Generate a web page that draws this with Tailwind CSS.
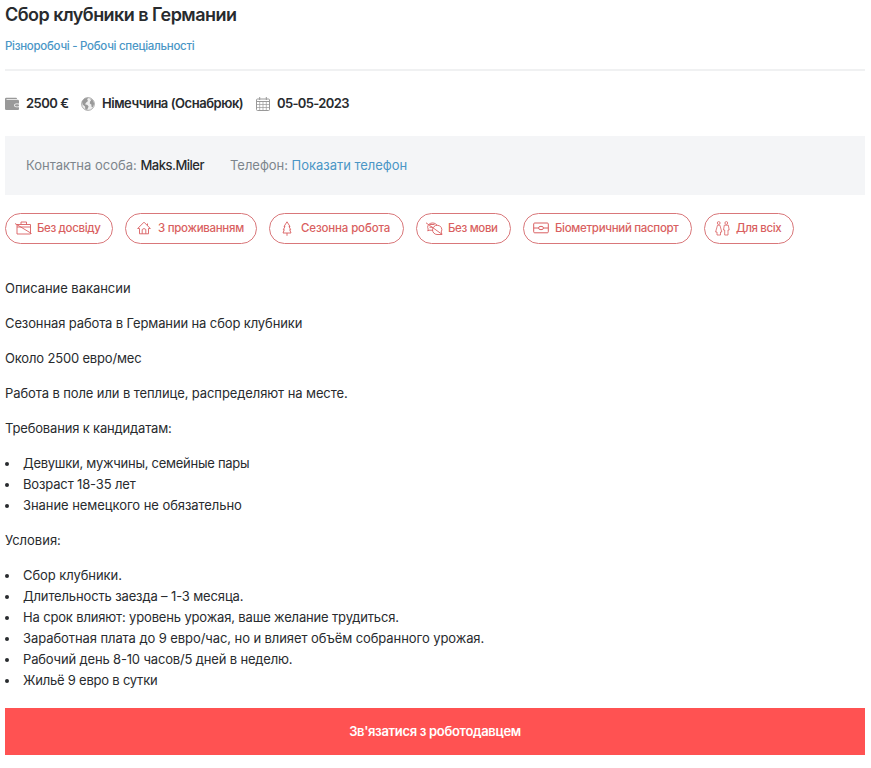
<!DOCTYPE html>
<html lang="uk">
<head>
  <meta charset="UTF-8" />
  <meta name="viewport" content="width=device-width,initial-scale=1" />
  <title>Сбор клубники в Германии</title>
  <script src="https://cdn.jsdelivr.net/npm/@tailwindcss/browser@4"></script>
</head>
<body class="bg-white font-['Inter',sans-serif] text-[#282b2e] overflow-hidden">
  <main class="w-[860px] ml-[5px] text-[13px] leading-[21px]">
    <!-- Title -->
    <header class="h-[71px] border-b-2 border-[#f0f1f2]">
      <h1 class="pt-[3px] text-[18px] leading-[24px] font-semibold whitespace-nowrap tracking-[-0.54px]">Сбор клубники в Германии</h1>
      <p class="mt-[10px] text-[11.5px] leading-[18px] font-medium text-[#4a96c6] whitespace-nowrap tracking-[-0.28px]"><a href="#">Різноробочі - Робочі спеціальності</a></p>
    </header>

    <!-- Salary, place, date -->
    <section class="flex h-[65px] items-center font-semibold whitespace-nowrap">
      <div class="flex w-[76px] items-center gap-[7px]">
        <svg width="14" height="14" viewBox="0 0 14 14" fill="#999" class="shrink-0"><path d="M0 2Q0 .8 1.200.8H11Q12 .8 12 2H1.500v.8H13Q14 3 14 4v2.500H11a1.800 1.800 0 0 0 0 3.700h3V12Q14 13 13 13H1.200Q0 13 0 11.800z"/><rect x="10" y="7.300" width="4" height="2.100" rx="1"/></svg>
        <span class="tracking-[-0.5px]">2500 €</span>
      </div>
      <div class="flex w-[175px] items-center gap-[7px]">
        <svg width="14" height="14" viewBox="0 0 14 14" class="shrink-0"><circle cx="7" cy="7" r="6.400" fill="#eee" stroke="#999" stroke-width=".8"/><path d="M1 4.500 3.500 1.500 7 .8 6.200 2.500 7 4 5.200 5.500 4 7.200 6.400 8 7.600 9.600 6.200 12.800 4.300 12.400 4 9.600 1.600 7.500zM9.200 1.500 12 3.600 13.200 6.800 11.800 10.200 10.300 9.500 10.500 7.800 8.800 6.600 9 4.600 10 3.800z" fill="#999"/></svg>
        <span class="tracking-[-0.47px]">Німеччина (Оснабрюк)</span>
      </div>
      <div class="flex items-center gap-[7px]">
        <svg width="14" height="14" viewBox="0 0 14 14" fill="none" stroke="#999" class="shrink-0"><rect x=".5" y="2" width="13" height="11.500" rx="1"/><path d="M.5 4.500h13M3.700 0v3M10.300 0v3"/><path d="M.5 7.500h13M.5 10.500h13M3.700 5v8.500M7 5v8.500M10.300 5v8.500" stroke-width=".7"/></svg>
        <span class="tracking-[-0.65px]">05-05-2023</span>
      </div>
    </section>

    <!-- Contact -->
    <section class="flex h-[59px] items-center bg-[#f4f5f7] pl-[21px] text-[#7d858c] whitespace-nowrap">
      <p class="w-[204px]">Контактна особа: <span class="font-medium text-[#282b2e] tracking-[-0.5px]">Maks.Miler</span></p>
      <p class="tracking-[-0.03px]">Телефон: <a href="#" class="text-[#4a96c6]">Показати телефон</a></p>
    </section>

    <!-- Tags -->
    <section class="mt-[18px] flex h-[31px] gap-3 text-[11.5px] font-medium text-[#d95f61] whitespace-nowrap">
      <div class="flex w-[108px] items-center rounded-full border border-[#d9777a] pb-px pl-[9px] gap-[5px]">
        <svg width="17" height="14" viewBox="0 0 17 14" fill="none" stroke="currentColor" stroke-width=".9" class="shrink-0"><path d="M2 3.500h13.500V13H2zM6 3.500V1h5.500v2.500M2 6h13.500M0 2.500l16.500 10"/></svg>
        <span class="tracking-[-0.36px]">Без досвіду</span>
      </div>
      <div class="flex w-[132px] items-center rounded-full border border-[#d9777a] pb-px pl-[11px] gap-[7px]">
        <svg width="14" height="14" viewBox="0 0 14 14" fill="none" stroke="currentColor" stroke-width=".9" class="shrink-0"><path d="M.7 7.500 7 1.200l6.300 6.300M.7 7.500h1.800v5.300h9V7.500h1.800M5.200 12.800V8.500Q7 6.500 8.800 8.500v4.300M10.500 4.500v-2"/></svg>
        <span class="tracking-[-0.3px]">З проживанням</span>
      </div>
      <div class="flex w-[135px] items-center rounded-full border border-[#d9777a] pb-px pl-[10px] gap-[7px]">
        <svg width="14" height="15" viewBox="0 0 14 15" fill="none" stroke="currentColor" stroke-width=".9" class="shrink-0"><path d="M7 .8 4 5.500h1L3.300 8.700h1L3 12h8L9.700 8.700h1L9 5.500h1zM7 12v2.800"/></svg>
        <span class="tracking-[-0.15px]">Сезонна робота</span>
      </div>
      <div class="flex w-[95px] items-center rounded-full border border-[#d9777a] pb-px pl-[9px] gap-[5px]">
        <!-- two speech bubbles, crossed out -->
        <svg width="17" height="15" viewBox="0 0 17 15" fill="none" stroke="currentColor" stroke-width=".9" class="shrink-0"><path d="M7 9.200H3L1.800 10l.4-2A4.800 4 0 1 1 11 4.200"/><path d="M11.300 4.300A4.400 4.400 0 0 1 15.200 11l.8 2.500H11A4.500 4.500 0 0 1 11.300 4.300zM0 1.800l16 11.500M3.500 3.500h5M3.500 6.200h3"/></svg>
        <span class="tracking-[-0.35px]">Без мови</span>
      </div>
      <div class="flex w-[169px] items-center rounded-full border border-[#d9777a] pb-px pl-[9px] gap-[6px]">
        <svg width="16" height="12" viewBox="0 0 16 12" fill="none" stroke="currentColor" class="shrink-0"><rect x=".7" y="1" width="14.600" height="9.800" rx="1"/><path d="M.7 6H5.500M10.500 6h4.800"/><ellipse cx="8" cy="6" rx="2.500" ry="1.700"/></svg>
        <span class="tracking-[-0.31px]">Біометричний паспорт</span>
      </div>
      <div class="flex w-[90px] items-center rounded-full border border-[#d9777a] pb-px pl-[10px] gap-[6px]">
        <svg width="15" height="15" viewBox="0 0 15 15" fill="none" stroke="currentColor" stroke-width=".8" class="shrink-0"><circle cx="3.700" cy="2" r="1.400"/><path d="M2.500 4.200h2.400L6.800 11H5.500v3H2V11H.6z"/><circle cx="11.300" cy="2" r="1.400"/><path d="M9.300 4.200h4L14.200 9H13V14H9.700V9H8.500z"/></svg>
        <span class="tracking-[-0.4px]">Для всіх</span>
      </div>
    </section>

    <!-- Description -->
    <section class="mt-[34px] flex flex-col gap-[14px] whitespace-nowrap">
      <p class="tracking-[-0.04px]">Описание вакансии</p>
      <p class="tracking-[-0.12px]">Сезонная работа в Германии на сбор клубники</p>
      <p class="tracking-[-0.17px]">Около 2500 евро/мес</p>
      <p class="tracking-[-0.1px]">Работа в поле или в теплице, распределяют на месте.</p>
      <p class="tracking-[-0.17px]">Требования к кандидатам:</p>
      <ul>
        <li class="flex items-center gap-[14px] tracking-[-0.27px]"><i class="mt-px size-1 rounded-full bg-[#282b2e]"></i>Девушки, мужчины, семейные пары</li>
        <li class="flex items-center gap-[14px] tracking-[-0.15px]"><i class="mt-px size-1 rounded-full bg-[#282b2e]"></i>Возраст 18-35 лет</li>
        <li class="flex items-center gap-[14px] tracking-[-0.06px]"><i class="mt-px size-1 rounded-full bg-[#282b2e]"></i>Знание немецкого не обязательно</li>
      </ul>
      <p>Условия:</p>
      <ul>
        <li class="flex items-center gap-[14px] tracking-[-0.07px]"><i class="mt-px size-1 rounded-full bg-[#282b2e]"></i>Сбор клубники.</li>
        <li class="flex items-center gap-[14px] tracking-[-0.14px]"><i class="mt-px size-1 rounded-full bg-[#282b2e]"></i>Длительность заезда – 1-3 месяца.</li>
        <li class="flex items-center gap-[14px] tracking-[-0.16px]"><i class="mt-px size-1 rounded-full bg-[#282b2e]"></i>На срок влияют: уровень урожая, ваше желание трудиться.</li>
        <li class="flex items-center gap-[14px] tracking-[-0.08px]"><i class="mt-px size-1 rounded-full bg-[#282b2e]"></i>Заработная плата до 9 евро/час, но и влияет объём собранного урожая.</li>
        <li class="flex items-center gap-[14px] tracking-[-0.16px]"><i class="mt-px size-1 rounded-full bg-[#282b2e]"></i>Рабочий день 8-10 часов/5 дней в неделю.</li>
        <li class="flex items-center gap-[14px] tracking-[-0.22px]"><i class="mt-px size-1 rounded-full bg-[#282b2e]"></i>Жильё 9 евро в сутки</li>
      </ul>
    </section>

    <button class="mt-[17px] block h-[47px] w-full bg-[#ff5252] font-semibold text-white tracking-[-0.32px]">Зв'язатися з роботодавцем</button>
  </main>
</body>
</html>
